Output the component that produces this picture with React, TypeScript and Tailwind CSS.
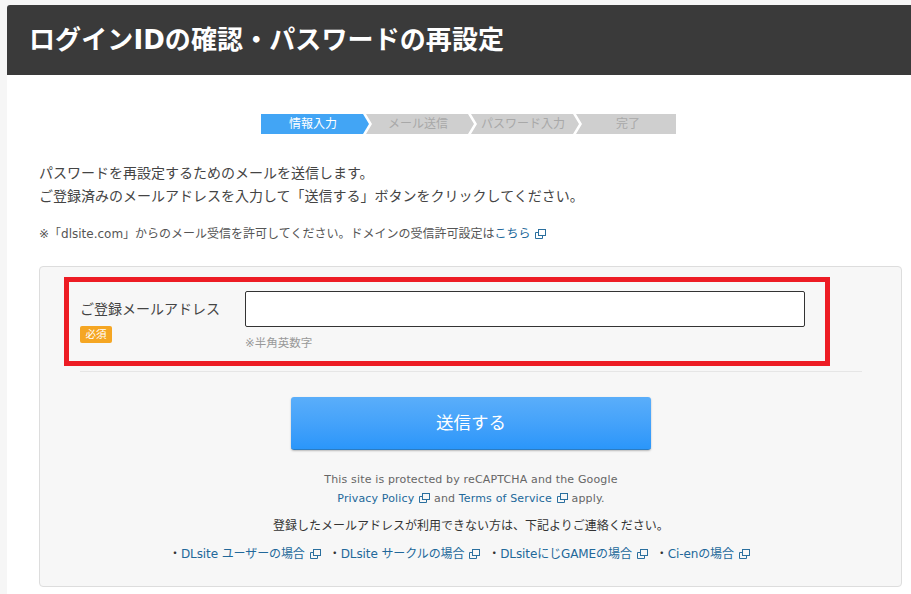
const jp = '[font-family:"DejaVu_Sans","Noto_Sans_CJK_JP",sans-serif]';

function ExternalIcon() {
  return (
    <svg width="11" height="10" viewBox="0 0 11 10" fill="none" stroke="#2a6f9e" strokeWidth="1" className="inline-block ml-[5px] align-[-1px]">
      <rect x="3.5" y="0.5" width="7" height="6" />
      <path d="M3.5 3.5H0.5V9.5H7.5V6.5" />
    </svg>
  );
}

function Ext({ children }: { children: React.ReactNode }) {
  return (
    <a className="text-[#22689a]">
      {children}
      <ExternalIcon />
    </a>
  );
}

const steps = [
  { label: '情報入力', active: true, first: true },
  { label: 'メール送信' },
  { label: 'パスワード入力' },
  { label: '完了', last: true },
];

const contacts = ['DLsite ユーザーの場合', 'DLsite サークルの場合', 'DLsiteにじGAMEの場合', 'Ci-enの場合'];

export default function App() {
  return (
    <div className={`h-[594px] overflow-hidden bg-[#f6f6f6] pt-[5px] pl-[7px] ${jp}`}>
      <header className="h-[70px] bg-[#3a3a3a] rounded-tl-[3px] pl-[22px] flex items-center">
        <h1 className="text-[26px] font-bold text-white leading-none tracking-[0.1px]">ログインIDの確認・パスワードの再設定</h1>
      </header>

      <main className="bg-white h-[519px] pl-[32px] pr-[9px] pt-[39px]">
        <ol className="flex justify-center pr-[4px] h-[20px] text-[12px] leading-[20px]">
          {steps.map((s) => (
            <li
              key={s.label}
              className={`text-center ${s.last ? 'w-[100px] pl-[4px]' : 'w-[108px] -mr-[3px] pr-[4px]'} ${s.active ? 'bg-[#42a5f5] text-white' : 'bg-[#cfcfcf] text-[#a8a8a8]'} ${
                s.first
                  ? '[clip-path:polygon(0_0,102px_0,108px_50%,102px_100%,0_100%)]'
                  : s.last
                    ? '[clip-path:polygon(0_0,100%_0,100%_100%,0_100%,6px_50%)]'
                    : '[clip-path:polygon(0_0,102px_0,108px_50%,102px_100%,0_100%,6px_50%)]'
              }`}
            >
              {s.label}
            </li>
          ))}
        </ol>

        <div className="mt-[28px] text-[14px] leading-[23px] text-[#444]">
          <p>パスワードを再設定するためのメールを送信します。</p>
          <p>ご登録済みのメールアドレスを入力して「送信する」ボタンをクリックしてください。</p>
        </div>
        <p className="mt-[16px] text-[12px] leading-[20px] text-[#555]">
          ※「dlsite.com」からのメール受信を許可してください。ドメインの受信許可設定は<Ext>こちら</Ext>
        </p>

        <section className="mt-[22px] h-[321px] bg-[#f7f7f7] border border-[#dddddd] rounded-[4px] pl-[24px] pr-[40px] pt-[10px]">
          <div className="w-[766px] h-[89px] border-[5px] border-[#ed1c24] pl-[11px] pr-[20px] pt-[9px] flex">
            <div className="w-[165px] shrink-0">
              <div className="text-[14px] leading-[20px] mt-[8px] text-[#444]">ご登録メールアドレス</div>
              <span className="mt-[7px] block w-[32px] h-[17px] rounded-[2px] bg-[#f5a623] text-white text-[10.5px] leading-[17px] text-center">必須</span>
            </div>
            <div className="flex-1">
              <input className="block w-full h-[36px] bg-white border border-[#333] rounded-[2px]" />
              <div className="mt-[8px] text-[11.5px] leading-[16px] text-[#999]">※半角英数字</div>
            </div>
          </div>

          <div className="mt-[5px] h-px bg-[#e6e6e6] ml-[16px] w-[782px]" />

          <div className="w-[814px] text-center">
            <button className="mt-[25px] block mx-auto w-[360px] h-[53px] rounded-[3px] bg-gradient-to-b from-[#5aaefa] to-[#2a96fa] border-b border-[#2b7cc2] shadow-[0_1px_2px_rgba(0,0,0,0.25)] text-white text-[17.5px]">
              送信する
            </button>
            <div className="mt-[20px] text-[11px] leading-[19px] text-[#666] tracking-[0.15px]">
              <p>This site is protected by reCAPTCHA and the Google</p>
              <p>
                <Ext>Privacy Policy</Ext> and <Ext>Terms of Service</Ext> apply.
              </p>
            </div>
            <p className="mt-[8px] text-[12px] leading-[20px] text-[#333]">登録したメールアドレスが利用できない方は、下記よりご連絡ください。</p>
            <ul className="mt-[8px] pr-[23px] flex justify-center gap-[8px] text-[12px] leading-[20px] text-[#333] tracking-[-0.1px]">
              {contacts.map((c) => (
                <li key={c}>
                  ・<Ext>{c}</Ext>
                </li>
              ))}
            </ul>
          </div>
        </section>
      </main>
    </div>
  );
}
